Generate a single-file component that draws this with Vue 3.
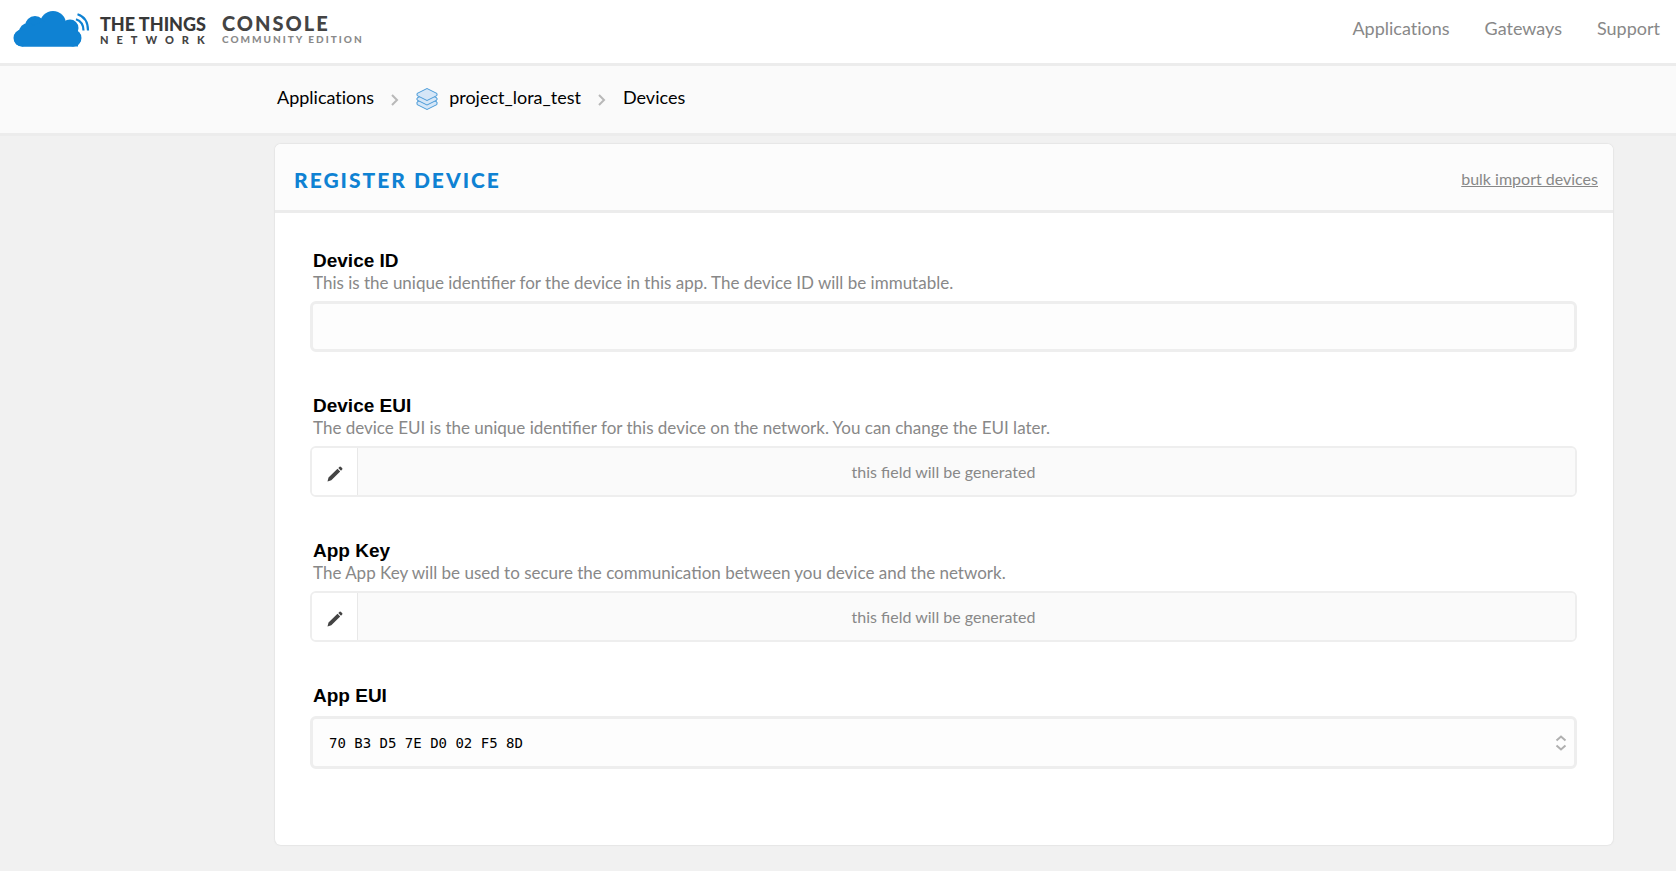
<script setup>
import { ref } from 'vue'

const nav = ['Applications', 'Gateways', 'Support']
const fields = [
  {
    id: 'device-eui',
    label: 'Device EUI',
    help: 'The device EUI is the unique identifier for this device on the network. You can change the EUI later.',
  },
  {
    id: 'app-key',
    label: 'App Key',
    help: 'The App Key will be used to secure the communication between you device and the network.',
  },
]
const deviceId = ref('')
const appEui = ref('70 B3 D5 7E D0 02 F5 8D')
</script>

<template>
  <div class="page">
    <header class="topbar">
      <a class="brand" href="#" aria-label="The Things Network Console">
        <svg class="cloud" width="72" height="44" viewBox="0 0 72 44" aria-hidden="true">
          <g fill="#0f82d3">
            <circle cx="41" cy="16" r="13" />
            <circle cx="23" cy="18" r="10" />
            <circle cx="16" cy="24" r="9" />
            <circle cx="10" cy="30" r="8.500" />
            <circle cx="58" cy="20" r="8.500" />
            <circle cx="61" cy="30" r="8.500" />
            <path d="M10 22L30 14H55L66 22V38.500H10Z" />
            <rect x="2" y="22" width="67" height="16.500" rx="8" />
          </g>
          <path fill="none" stroke="#0f82d3" stroke-width="2.200" d="M65.500 6.200Q76 9.500 76 22.500M64 11.200Q71.500 13.800 71.500 22.500" />
        </svg>
        <span class="wordmark">
          <span class="name">THE THINGS</span>
          <span class="network">NETWORK</span>
        </span>
        <span class="wordmark">
          <span class="console">CONSOLE</span>
          <span class="edition">COMMUNITY EDITION</span>
        </span>
      </a>
      <nav class="nav">
        <a v-for="item in nav" :key="item" href="#">{{ item }}</a>
      </nav>
    </header>

    <nav class="crumbs" aria-label="Breadcrumb">
      <a href="#">Applications</a>
      <svg class="chevron" width="8" height="12" viewBox="0 0 8 12" aria-hidden="true">
        <path d="M1 1L6 6L1 11" />
      </svg>
      <a class="app" href="#">
        <svg width="22" height="22" viewBox="0 0 22 22" aria-hidden="true">
          <g fill="#d5e6f7" stroke="#4a9bd8" stroke-linejoin="round">
            <path d="M1 14L4 12.500H18L21 14V16.500L11 21.500L1 16.500Z" />
            <path d="M1 10L4 8.500H18L21 10V12L11 17L1 12Z" />
            <path d="M1 5.500L11 0.500L21 5.500V7.500L11 12.500L1 7.500Z" />
          </g>
        </svg>
        project_lora_test
      </a>
      <svg class="chevron" width="8" height="12" viewBox="0 0 8 12" aria-hidden="true">
        <path d="M1 1L6 6L1 11" />
      </svg>
      <a href="#">Devices</a>
    </nav>

    <main class="card">
      <div class="card-head">
        <h1>REGISTER DEVICE</h1>
        <a href="#">bulk import devices</a>
      </div>
      <form class="form" @submit.prevent>
        <div class="field">
          <label for="device-id">Device ID</label>
          <p>This is the unique identifier for the device in this app. The device ID will be immutable.</p>
          <input id="device-id" v-model="deviceId" class="box text" type="text" />
        </div>

        <div v-for="f in fields" :key="f.id" class="field">
          <label :for="f.id">{{ f.label }}</label>
          <p>{{ f.help }}</p>
          <div class="box generated">
            <button type="button" :aria-label="'Edit ' + f.label">
              <svg width="16" height="16" viewBox="0 0 16 16" aria-hidden="true">
                <path fill="#444" d="M0.500 15.500L1.500 11.500L10.500 2.800L13.200 5.500L4.300 14.300ZM11.300 2L12.600 0.800Q13.300 0.200 14 0.900L15.100 2Q15.800 2.700 15.200 3.400L14 4.700Z" />
              </svg>
            </button>
            <input :id="f.id" type="text" readonly placeholder="this field will be generated" />
          </div>
        </div>

        <div class="field">
          <label for="app-eui">App EUI</label>
          <div class="box choice">
            <select id="app-eui" v-model="appEui">
              <option>70 B3 D5 7E D0 02 F5 8D</option>
            </select>
            <svg width="12" height="16" viewBox="0 0 12 16" aria-hidden="true">
              <path fill="none" stroke="#b0b0b0" stroke-width="2" d="M1.500 5.500L6 1.500L10.500 5.500M1.500 10.500L6 14.500L10.500 10.500" />
            </svg>
          </div>
        </div>
      </form>
    </main>
  </div>
</template>

<style>
body {
  background: #f1f1f1;
}
</style>

<style scoped>
.page {
  font-family: Lato, "Liberation Sans", sans-serif;
  font-size: 18px;
  line-height: 24px;
  color: #000;
  padding-bottom: 24px;
}
a {
  color: inherit;
  text-decoration: none;
}
.topbar {
  display: flex;
  justify-content: space-between;
  align-items: center;
  box-sizing: border-box;
  height: 66px;
  padding: 0 16px 0 12px;
  background: #fff;
  border-bottom: 3px solid #ececec;
}
.brand {
  display: flex;
  align-items: center;
  gap: 16px;
  padding-bottom: 4px;
  font-weight: 900;
  color: #444;
}
.cloud {
  overflow: visible;
}
.wordmark {
  display: flex;
  flex-direction: column;
}
.name {
  font-size: 18px;
  line-height: 20px;
  color: #383838;
}
.network {
  margin-right: -8px;
  font-size: 11px;
  line-height: 12px;
  letter-spacing: 8px;
}
.console {
  font-size: 20px;
  line-height: 18px;
  letter-spacing: 2px;
}
.edition {
  font-size: 10px;
  line-height: 14px;
  letter-spacing: 2px;
  color: #8a8a8a;
}
.nav {
  display: flex;
  gap: 35px;
  padding-bottom: 8px;
  color: #888;
}
.nav,
.crumbs {
  font-variant-ligatures: none;
}
.crumbs {
  display: flex;
  align-items: center;
  gap: 17px;
  box-sizing: border-box;
  height: 70px;
  padding: 0 63px 6px 277px;
  background: #fafafa;
  border-bottom: 3px solid #ececec;
}
.chevron {
  fill: none;
  stroke: #b8b8b8;
  stroke-width: 2;
  margin-top: 6px;
}
.app {
  display: flex;
  align-items: center;
  gap: 11px;
}
.app svg {
  margin-top: 4px;
}
.card {
  margin: 8px 63px 0 275px;
  background: #fff;
  border-radius: 6px;
  box-shadow: 0 0 1px 1px #e6e6e6;
}
.card-head {
  display: flex;
  justify-content: space-between;
  align-items: center;
  box-sizing: border-box;
  height: 69px;
  padding: 4px 15px 0 19px;
  background: #fcfcfc;
  border-bottom: 3px solid #ececec;
  border-radius: 6px 6px 0 0;
}
.card-head h1 {
  margin: 2px 0 0;
  font-size: 21px;
  font-weight: 900;
  letter-spacing: 2px;
  color: #0f82d3;
}
.card-head a {
  font-size: 16px;
  color: #888;
  text-decoration: underline;
}
.form {
  display: flex;
  flex-direction: column;
  gap: 42px;
  padding: 36px 36px 76px 35px;
}
.field {
  display: flex;
  flex-direction: column;
}
.field label {
  margin-left: 3px;
  font: bold 19px/24px "Liberation Sans", Arial, sans-serif;
}
.field p {
  margin: 0 0 8px 3px;
  font-size: 17px;
  line-height: 20px;
  color: #888;
}
.box {
  box-sizing: border-box;
  width: 100%;
  height: 51px;
  border: 3px solid #eee;
  border-radius: 6px;
  background: #fdfdfd;
}
.text {
  padding: 0 16px;
  font: inherit;
}
.generated {
  display: flex;
  overflow: hidden;
  border-width: 2px;
}
.generated button {
  display: flex;
  align-items: center;
  justify-content: center;
  width: 46px;
  padding: 4px 0 0;
  background: #fff;
  border: 0;
  border-right: 1px solid #e8e8e8;
}
.generated input {
  flex: 1;
  min-width: 0;
  padding: 0 46px 0 0;
  border: 0;
  background: #fafafa;
  font: 16px Lato, sans-serif;
  text-align: center;
}
.generated input::placeholder {
  color: #888;
  opacity: 1;
}
.choice {
  display: flex;
  align-items: center;
  height: 53px;
  margin-top: 8px;
  padding-right: 7px;
}
.choice select {
  flex: 1;
  height: 100%;
  padding: 0 16px;
  appearance: none;
  border: 0;
  background: none;
  color: #000;
  font: 14px "DejaVu Sans Mono", monospace;
}
</style>
